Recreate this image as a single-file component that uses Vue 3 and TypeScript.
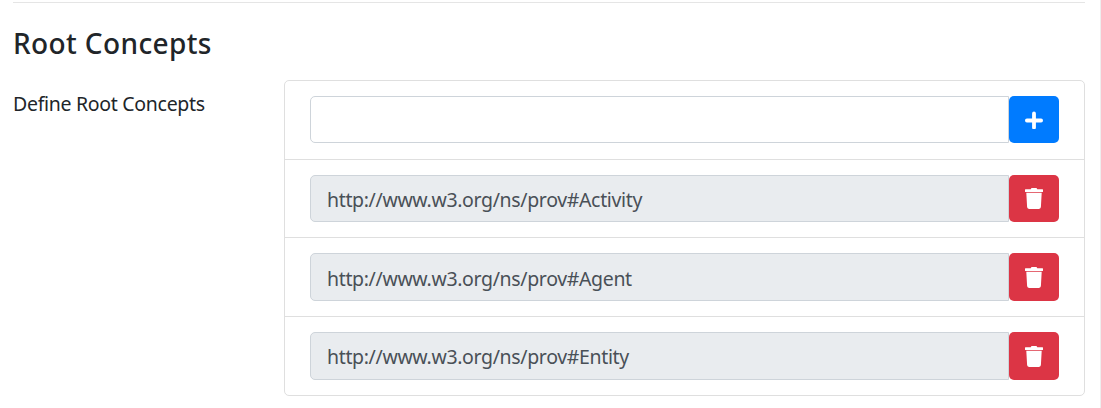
<script setup lang="ts">
import { ref } from 'vue'

const draft = ref<string>('')
const concepts = ref<string[]>([
  'http://www.w3.org/ns/prov#Activity',
  'http://www.w3.org/ns/prov#Agent',
  'http://www.w3.org/ns/prov#Entity',
])

function addConcept(): void {
  const value = draft.value.trim()
  if (!value) return
  concepts.value.push(value)
  draft.value = ''
}

function removeConcept(index: number): void {
  concepts.value.splice(index, 1)
}
</script>

<template>
  <main class="page">
    <hr class="rule" />
    <h2 class="title">Root Concepts</h2>
    <div class="field">
      <label class="label" for="new-concept">Define Root Concepts</label>
      <ul class="list">
        <li class="item">
          <input id="new-concept" v-model="draft" class="control" type="text" @keyup.enter="addConcept" />
          <button class="btn primary" type="button" aria-label="Add" @click="addConcept">
            <svg class="icon" viewBox="0 0 18 19" width="18" height="19">
              <path d="M9 3.400v14.200M1.900 10.500h14.200" fill="none" stroke="#fff" stroke-width="3.800" stroke-linecap="round" />
            </svg>
          </button>
        </li>
        <li v-for="(concept, index) in concepts" :key="concept" class="item">
          <div class="control readonly">{{ concept }}</div>
          <button class="btn danger" type="button" aria-label="Remove" @click="removeConcept(index)">
            <svg class="icon" viewBox="0 0 18 21" width="18" height="21">
              <path
                fill="#fff"
                d="M6.500 0h5l.8 1.200h5.200q.5 0 .5.5v1.800q0 .5-.5.5H.5q-.5 0-.5-.5V1.700q0-.5.5-.5h5.200zM1.300 4.700h15.400l-.8 14.400q-.1 1.800-1.900 1.800H4q-1.800 0-1.900-1.800z"
              />
            </svg>
          </button>
        </li>
      </ul>
    </div>
  </main>
</template>

<style>
body {
  background: #fff;
}
</style>

<style scoped>
.page {
  box-sizing: border-box;
  height: 408px;
  padding: 2px 15px 0 13px;
  border-right: 1px solid #eeeeee;
  overflow: hidden;
  font-family: 'Segoe UI', 'Noto Sans', 'Open Sans', sans-serif;
  color: #212529;
}
.rule {
  height: 1px;
  margin: 0;
  border: 0;
  background: #e5e5e5;
}
.title {
  height: 34px;
  margin: 23px 0 20px;
  font-size: 28px;
  font-weight: 500;
  letter-spacing: 0.380px;
  line-height: 34px;
  white-space: nowrap;
}
.field {
  display: grid;
  grid-template-columns: 271px 801px;
}
.label {
  padding-top: 9px;
  font-size: 19.500px;
  letter-spacing: -0.300px;
  line-height: 30px;
  white-space: nowrap;
}
.list {
  display: grid;
  grid-template-rows: 79px 78px 79px 78px;
  box-sizing: border-box;
  margin: 0;
  padding: 0;
  border: 1px solid #dfdfdf;
  border-radius: 5px;
  list-style: none;
}
.item {
  display: flex;
  box-sizing: border-box;
  padding: 15px 25px;
  border-bottom: 1px solid #dfdfdf;
}
.item:first-child {
  padding-bottom: 16px;
}
.item:last-child {
  border-bottom: 0;
}
.control {
  flex: 1;
  min-width: 0;
  box-sizing: border-box;
  padding: 0 16px;
  border: 1px solid #ced4da;
  border-radius: 5px 0 0 5px;
  background: #fff;
  outline: none;
  font: inherit;
  font-size: 19.500px;
  letter-spacing: -0.350px;
  line-height: 48px;
  color: #495057;
  white-space: nowrap;
}
.readonly {
  background: #e9ecef;
}
.item:nth-child(3) .control {
  line-height: 50px;
}
.btn {
  display: flex;
  align-items: center;
  justify-content: center;
  width: 50px;
  padding: 0;
  border: 0;
  border-radius: 5px;
}
.primary {
  background: #007bff;
}
.danger {
  background: #dc3545;
}
.icon {
  display: block;
}
</style>
